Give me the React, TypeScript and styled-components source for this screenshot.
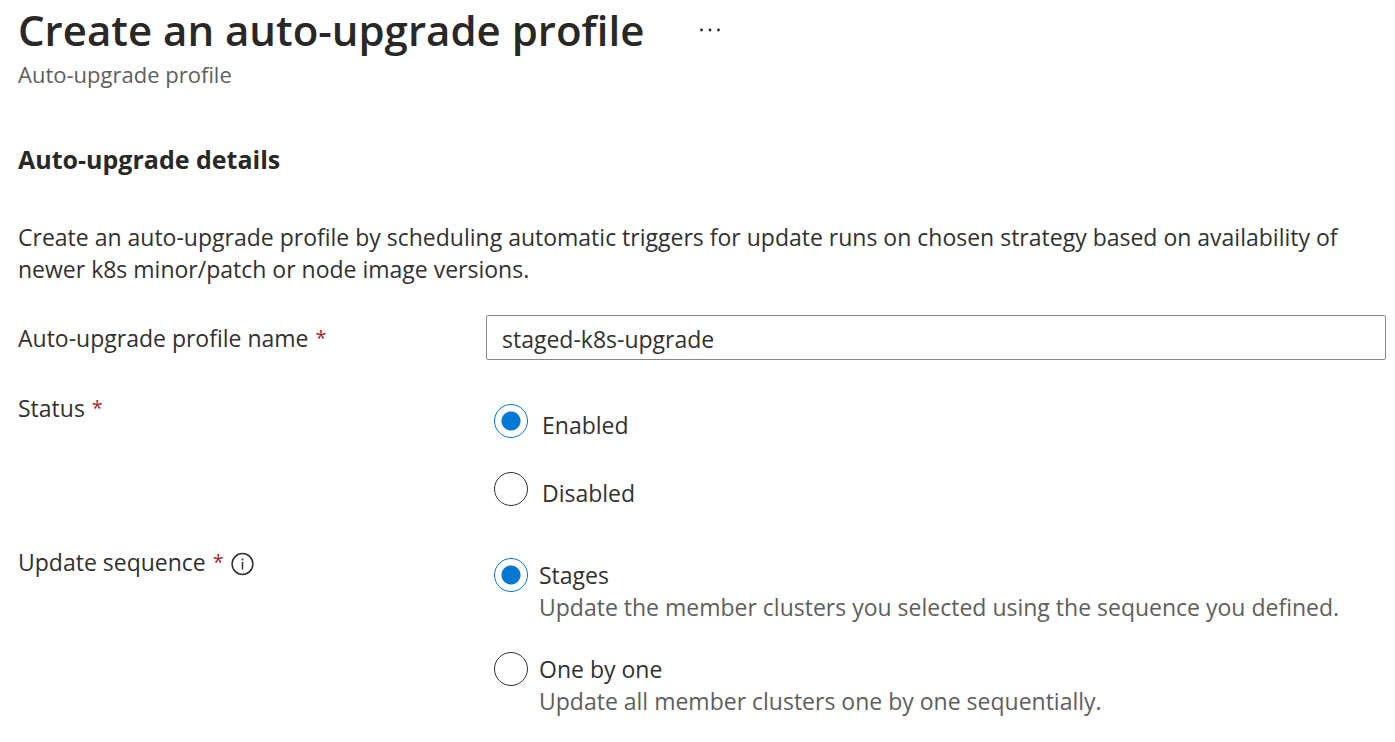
import React, { useState } from "react";
import styled, { createGlobalStyle } from "styled-components";

const GlobalStyle = createGlobalStyle`
  * { box-sizing: border-box; }
  body {
    margin: 0;
    background: #fff;
    color: #323130;
    font-family: "Segoe UI", "Open Sans", "Noto Sans", sans-serif;
    font-size: 23px;
    line-height: 32px;
  }
`;

const Page = styled.main`
  padding: 2px 9px 20px 18px;
`;

const TitleRow = styled.div`
  display: flex;
  align-items: center;
  gap: 55px;
`;

const Title = styled.h1`
  margin: 0;
  font-size: 42px;
  line-height: 56px;
  font-weight: 600;
  color: #292827;
`;

const MoreButton = styled.button`
  display: flex;
  padding: 0;
  border: 0;
  background: none;
  color: #292827;
`;

const Subtitle = styled.p`
  margin: 0;
  font-size: 22px;
  color: #605e5c;
`;

const SectionTitle = styled.h2`
  margin: 53px 0 46px;
  font-size: 25px;
  line-height: 32px;
  font-weight: 700;
  color: #292827;
`;

const Description = styled.p`
  margin: 0 0 30px;
`;

const Form = styled.form`
  display: grid;
  grid-template-columns: 468px minmax(0, 1fr);
  row-gap: 25px;
`;

const Label = styled.div`
  display: flex;
  gap: 7px;
  padding-top: 7px;
`;

const Required = styled.span`
  color: #a4262c;
  font-size: 20px;
`;

const InfoButton = styled.button`
  display: flex;
  align-items: center;
  height: 36px;
  padding: 0;
  border: 0;
  background: none;
  color: #323130;
`;

const TextInput = styled.input`
  width: 100%;
  height: 45px;
  padding: 2px 15px 0;
  border: 1px solid #8a8886;
  border-radius: 2px;
  background: #fff;
  color: inherit;
  font: inherit;
`;

const Options = styled.div<{ $gap: number }>`
  display: flex;
  flex-direction: column;
  gap: ${(p) => p.$gap}px;
  padding: 19px 0 5px 8px;
`;

const Option = styled.label<{ $gap: number }>`
  display: flex;
  gap: ${(p) => p.$gap}px;
`;

const Radio = styled.input`
  appearance: none;
  flex: none;
  width: 34px;
  height: 34px;
  margin: 0;
  border: 1px solid #323130;
  border-radius: 50%;
  background: #fff;
  &:checked {
    border-color: #0078d4;
    background: radial-gradient(circle, #0078d4 9px, #fff 10px);
  }
`;

const OptionText = styled.span<{ $top: number }>`
  padding-top: ${(p) => p.$top}px;
`;

const Hint = styled.span`
  display: block;
  color: #605e5c;
`;

export default function App() {
  const [name, setName] = useState("staged-k8s-upgrade");
  return (
    <>
      <GlobalStyle />
      <Page>
        <TitleRow>
          <Title>Create an auto-upgrade profile</Title>
          <MoreButton type="button" aria-label="More options">
            <svg width="22" height="4" viewBox="0 0 22 4" fill="currentColor">
              <circle cx="2.5" cy="2" r="1.4" />
              <circle cx="11" cy="2" r="1.4" />
              <circle cx="19.5" cy="2" r="1.4" />
            </svg>
          </MoreButton>
        </TitleRow>
        <Subtitle>Auto-upgrade profile</Subtitle>
        <SectionTitle>Auto-upgrade details</SectionTitle>
        <Description>
          Create an auto-upgrade profile by scheduling automatic triggers for update runs on chosen strategy based on
          availability of newer k8s minor/patch or node image versions.
        </Description>
        <Form>
          <Label as="label" htmlFor="profile-name">
            Auto-upgrade profile name <Required>*</Required>
          </Label>
          <TextInput id="profile-name" value={name} onChange={(e) => setName(e.target.value)} />
          <Label id="status-label">
            Status <Required>*</Required>
          </Label>
          <Options role="radiogroup" aria-labelledby="status-label" $gap={31}>
            <Option $gap={14}>
              <Radio type="radio" name="status" defaultChecked />
              <OptionText $top={5}>Enabled</OptionText>
            </Option>
            <Option $gap={14}>
              <Radio type="radio" name="status" />
              <OptionText $top={5}>Disabled</OptionText>
            </Option>
          </Options>
          <Label>
            <span id="sequence-label">Update sequence</span>
            <Required>*</Required>
            <InfoButton type="button" aria-label="About update sequence">
              <svg width="24" height="24" viewBox="0 0 24 24" fill="none" stroke="currentColor">
                <circle cx="11.5" cy="12" r="10.4" strokeWidth="1.5" />
                <path d="M11.5 10v7.5" strokeWidth="1.5" />
                <circle cx="11.5" cy="7.5" r="1" fill="currentColor" stroke="none" />
              </svg>
            </InfoButton>
          </Label>
          <Options role="radiogroup" aria-labelledby="sequence-label" $gap={29}>
            <Option $gap={11}>
              <Radio type="radio" name="sequence" defaultChecked />
              <OptionText $top={1}>
                Stages
                <Hint>Update the member clusters you selected using the sequence you defined.</Hint>
              </OptionText>
            </Option>
            <Option $gap={11}>
              <Radio type="radio" name="sequence" />
              <OptionText $top={1}>
                One by one
                <Hint>Update all member clusters one by one sequentially.</Hint>
              </OptionText>
            </Option>
          </Options>
        </Form>
      </Page>
    </>
  );
}
